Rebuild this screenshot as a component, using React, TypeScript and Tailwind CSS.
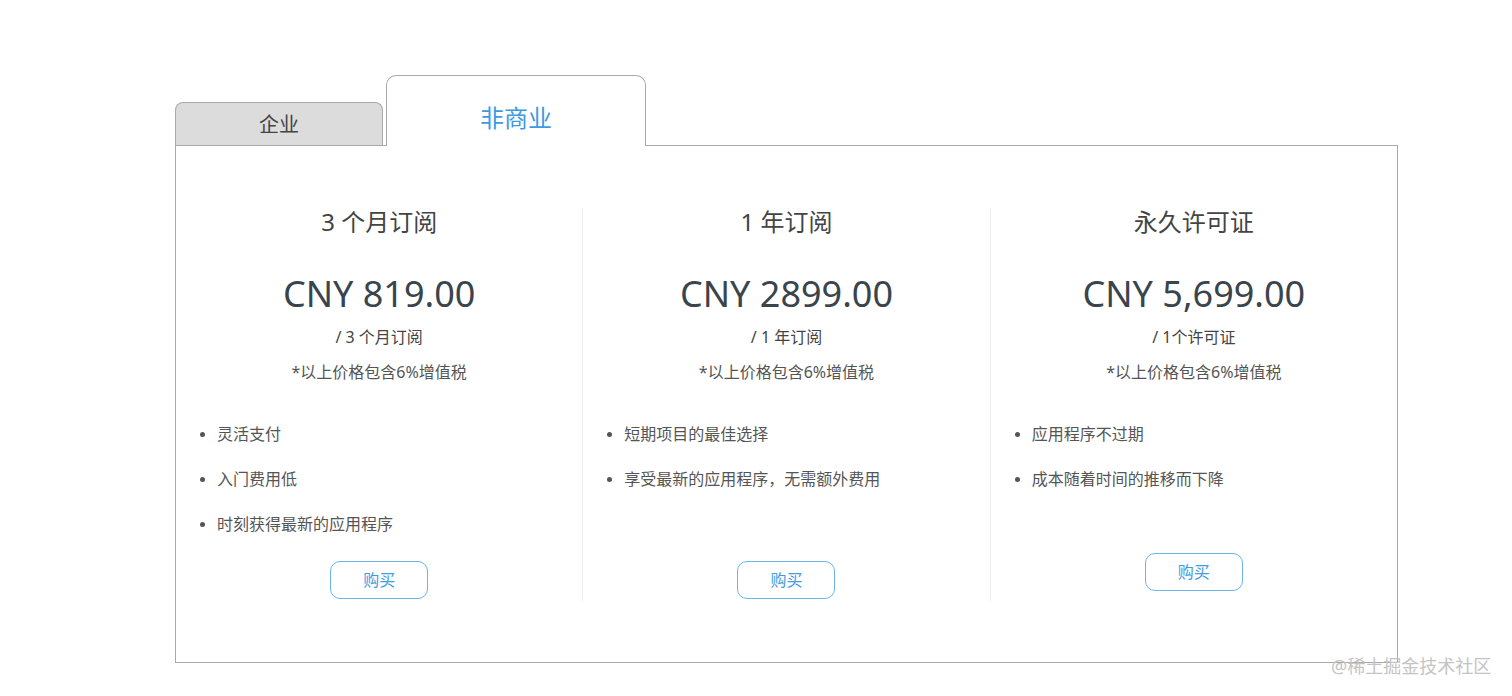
import React, { useState } from 'react';

interface Plan {
  title: string;
  price: string;
  period: string;
  features: string[];
  buttonClass: string;
}

const plans: Plan[] = [
  {
    title: '3 个月订阅',
    price: 'CNY 819.00',
    period: '/ 3 个月订阅',
    features: ['灵活支付', '入门费用低', '时刻获得最新的应用程序'],
    buttonClass: 'mt-[25px]',
  },
  {
    title: '1 年订阅',
    price: 'CNY 2899.00',
    period: '/ 1 年订阅',
    features: ['短期项目的最佳选择', '享受最新的应用程序，无需额外费用'],
    buttonClass: 'mt-[25px]',
  },
  {
    title: '永久许可证',
    price: 'CNY 5,699.00',
    period: '/ 1个许可证',
    features: ['应用程序不过期', '成本随着时间的推移而下降'],
    buttonClass: 'mt-[17px] mb-[8px]',
  },
];

function PlanColumn({ plan, first }: { plan: Plan; first: boolean }) {
  return (
    <div className={`flex-1 flex flex-col items-center pb-[2px] ${first ? '' : 'border-l border-[#ececec]'}`}>
      <div className="text-[24px] leading-[28px] text-[#444]">{plan.title}</div>
      <div className="mt-[36px] text-[36px] leading-[44px] text-[#3a444c]">{plan.price}</div>
      <div className="mt-[9px] text-[16px] leading-[24px] text-[#444]">{plan.period}</div>
      <div className="mt-[11px] text-[16px] leading-[24px] text-[#555]">*以上价格包含6%增值税</div>
      <ul className="mt-[38px] w-full px-[24px] h-[114px] flex flex-col gap-[21px]">
        {plan.features.map((f) => (
          <li key={f} className="flex items-center text-[16px] leading-[24px] text-[#555]">
            <span className="w-[5px] h-[5px] rounded-full bg-[#555] shrink-0" />
            <span className="ml-[12px]">{f}</span>
          </li>
        ))}
      </ul>
      <button
        type="button"
        className={`${plan.buttonClass} w-[98px] h-[38px] rounded-[10px] border border-[#6bb6ea] text-[16px] text-[#3f9de0] bg-white`}
      >
        购买
      </button>
    </div>
  );
}

export default function App() {
  const [tab, setTab] = useState<'biz' | 'non'>('non');

  return (
    <div
      className="relative w-[1512px] h-[696px] bg-white overflow-hidden"
      style={{ fontFamily: '"Noto Sans", "Noto Sans CJK SC", sans-serif' }}
    >
      <div className="pt-[75px] pl-[175px] w-[1398px]">
        <div className="flex items-end h-[70px]">
          <button
            type="button"
            onClick={() => setTab('biz')}
            className="w-[208px] h-[43px] bg-[#dcdcdc] border border-b-0 border-[#aaa] rounded-t-[8px] text-[20px] text-[#444] pt-[2px]"
          >
            企业
          </button>
          <button
            type="button"
            onClick={() => setTab('non')}
            className="relative z-10 -mb-px ml-[3px] w-[260px] h-[71px] bg-white border border-b-0 border-[#aaa] rounded-t-[10px] text-[24px] text-[#3d9ae0] pt-[14px]"
          >
            非商业
          </button>
        </div>
        <div className="w-[1223px] h-[518px] border border-[#aaa] pt-[62px] flex items-start">
          {tab === 'non' &&
            plans.map((p, i) => <PlanColumn key={p.title} plan={p} first={i === 0} />)}
        </div>
      </div>
      <div className="absolute left-[1331px] top-[654px] text-[18px] leading-[24px] text-[#c4c4c4]">
        @稀土掘金技术社区
      </div>
    </div>
  );
}
